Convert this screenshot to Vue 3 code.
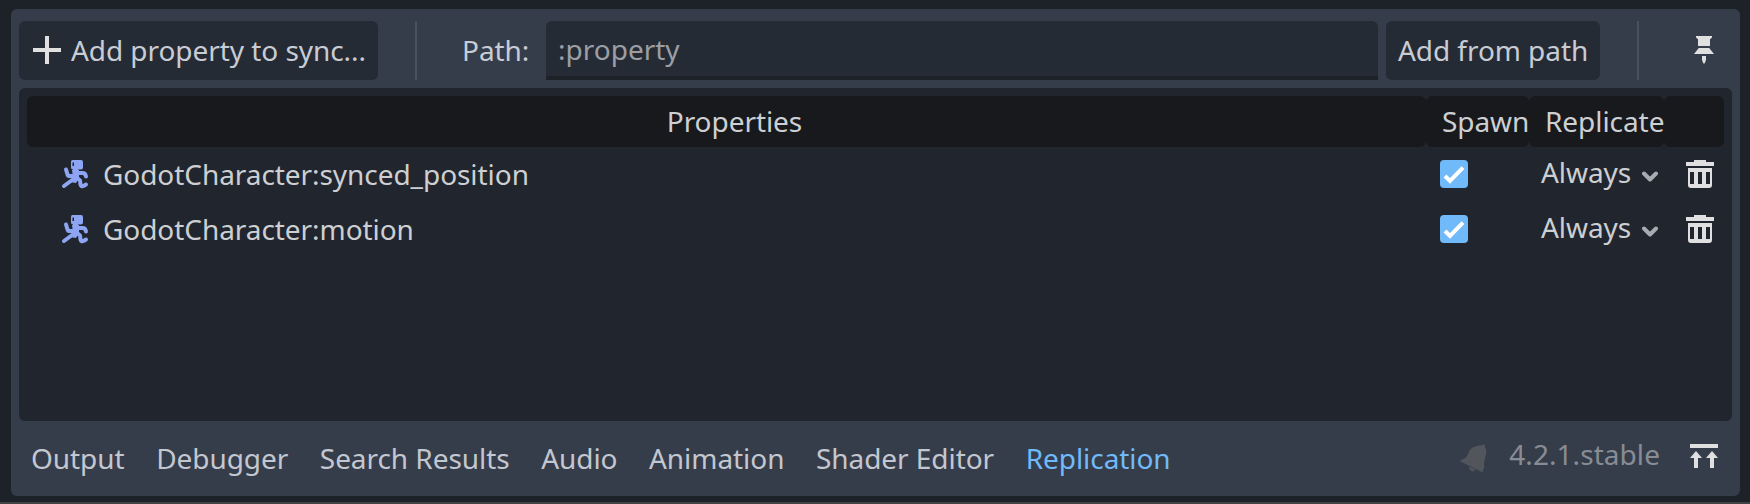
<script setup>
const rows = ['GodotCharacter:synced_position', 'GodotCharacter:motion']
const tabs = ['Output', 'Debugger', 'Search Results', 'Audio', 'Animation', 'Shader Editor', 'Replication']
const active = 'Replication'
</script>

<template>
  <div class="window">
    <section class="panel">
      <div class="toolbar">
        <button class="btn add">
          <svg class="icon" viewBox="0 0 16 16"><path d="M7 1h2v6h6v2H9v6H7V9H1V7h6z" /></svg>
          <span>Add property to sync...</span>
        </button>
        <i class="sep first"></i>
        <span class="label">Path:</span>
        <div class="field"><input placeholder=":property" /></div>
        <button class="btn from"><span>Add from path</span></button>
        <i class="sep second"></i>
        <svg class="icon pin" viewBox="0 0 16 16"><path d="M4 1h8v.7l-1 .9V6H5V2.6l-1-.9zM5.400 7h5.200l2.400 3H3zM7 11h2v2l-.7 1.700h-.6L7 13z" /></svg>
      </div>

      <div class="tree">
        <div class="grid head">
          <div class="cell center">Properties</div>
          <div class="cell">Spawn</div>
          <div class="cell rep">Replicate</div>
          <div class="cell"></div>
        </div>
        <div v-for="row in rows" :key="row" class="grid row">
          <div class="name">
            <svg class="icon body" viewBox="0 0 32 32">
              <path class="solid" fill-rule="evenodd" d="M12.500 2H21q2 0 2 2v5.500q0 2-2 2h-3v2h-5v-2q-2 0-2-2V4q0-2 1.500-2zM12.500 4.500V8H14V4.500z" />
              <path class="limb" d="M6 11.500l1.500 5q.5 1.500 2.500 1.500h4M4 28l9.500-7M18 15h4.500q3 0 3.500 3.500M16 19l4 3.500.5 4q.5 2.500 3 1.500l2.500-1.500" />
              <path class="solid" d="M12 12h7v8l-3 5-6-1 3-5z" />
            </svg>
            <span>{{ row }}</span>
          </div>
          <div class="check">
            <svg class="icon" viewBox="0 0 16 16">
              <rect class="box" x="1" y="1" width="14" height="14" rx="2" />
              <path class="tick" d="M3.500 9l2.500 2.500 6.500-6.700" />
            </svg>
          </div>
          <div class="mode">
            <span>Always</span>
            <svg class="chev" viewBox="0 0 16 12"><path d="M2 2.500l6 6 6-6" /></svg>
          </div>
          <div class="trash">
            <svg class="icon" viewBox="0 0 16 16"><path fill-rule="evenodd" d="M5 1h6v1h4v2H1V2h4zM2 5h12v8.500q0 1.500-1.500 1.500h-9Q2 15 2 13.500zM3 7v6h2V7zM7 7v6h2V7zM11 7v6h2V7z" /></svg>
          </div>
        </div>
      </div>

      <footer class="footer">
        <nav class="tabs">
          <span v-for="t in tabs" :key="t" :class="{ active: t === active }">{{ t }}</span>
        </nav>
        <div class="status">
          <svg class="icon bell" viewBox="0 0 32 32"><path d="M19 4q2.500-1 4.500-.5 1-1.500 2.500-.8 1.500.8 1 2.500 2 3 1 7l-2 8 .2 5.500q-.2 2-1.500 1.800l.8 1.500-1.500 1L2.500 19.500l.2-1.500 4.300-1.800q1.500-1 2.200-2.700l3-6Q14.500 4.500 19 4zM11 24.500l6.500 3q-1.500 2.500-4 1.500-2.500-1-2.500-4.500z" /></svg>
          <span class="version">4.2.1.stable</span>
          <svg class="icon" viewBox="0 0 16 16"><path d="M1 1h14v2H1zM4 4.500L7 8H5v5H3V8H1zM12 4.500L15 8h-2v5h-2V8H9z" /></svg>
        </div>
      </footer>
    </section>
  </div>
</template>

<style>
body { margin: 0; background: #1d2228; }
</style>

<style scoped>
.window {
  box-sizing: border-box;
  width: 1750px;
  height: 504px;
  padding: 9px 10px 0 11px;
  background: #1d2228;
  border-bottom: 2px solid #414244;
  font: 28px/38px "Noto Sans", sans-serif;
  letter-spacing: -0.06px;
  color: #cdcfd2;
  white-space: nowrap;
  overflow: hidden;
}
.panel {
  box-sizing: border-box;
  height: 487px;
  padding: 12px 8px 0;
  border-radius: 6px;
  background: #363d4a;
}
.icon { width: 32px; height: 32px; flex: none; display: block; fill: #e0e0e0; }
.toolbar { display: flex; height: 59px; align-items: center; color: #c8ccd5; }
.btn {
  box-sizing: border-box;
  height: 59px;
  border: 0;
  border-radius: 6px;
  background: #252b34;
  color: inherit;
  font: inherit;
  letter-spacing: inherit;
  padding: 0 12px;
  display: flex;
  align-items: center;
  flex: none;
}
.btn span, .label { padding-bottom: 2px; }
.add { width: 359px; gap: 8px; }
.add .icon { margin-top: -1px; }
.sep { width: 2px; height: 59px; background: #4a505c; flex: none; }
.first { margin-left: 37px; }
.label { width: 84px; margin-left: 45px; }
.field {
  box-sizing: border-box;
  width: 832px;
  height: 59px;
  border-radius: 6px 6px 0 0;
  background: #252b34;
  border-bottom: 4px solid #1d2229;
  padding: 9px 12px 0;
}
.field input {
  width: 100%;
  height: 38px;
  padding: 0;
  border: 0;
  outline: 0;
  background: none;
  font: inherit;
  color: inherit;
  display: block;
}
.field input::placeholder { color: #9b9ea4; opacity: 1; }
.from { width: 214px; margin-left: 8px; }
.second { margin-left: 37px; }
.pin { margin: -1px 0 0 49px; }
.tree {
  box-sizing: border-box;
  height: 333px;
  margin-top: 8px;
  padding: 8px;
  border-radius: 6px;
  background: #21262e;
}
.grid { display: grid; grid-template-columns: 1399px 103px 135px 60px; }
.head { height: 51px; margin-bottom: 1px; }
.cell { border-radius: 6px; background: #18191d; padding: 6px 0 0 16px; }
.cell.center { padding-left: 16px; text-align: center; }
.row { height: 55px; }
.name { display: flex; padding-left: 33px; }
.name .body { margin: 10px 11px 0 0; }
.name span { margin-top: 7px; }
.solid { fill: #8da5f3; }
.limb { fill: none; stroke: #8da5f3; stroke-width: 4; stroke-linecap: round; stroke-linejoin: round; }
.check { padding: 10px 0 0 12px; }
.box { fill: #70bafa; }
.tick { fill: none; stroke: #fff; stroke-width: 2; }
.mode { display: flex; padding: 5px 0 0 12px; }
.chev { width: 16px; height: 12px; margin: 18px 0 0 11px; fill: none; stroke: #a8abb1; stroke-width: 4; stroke-linecap: round; stroke-linejoin: round; }
.trash { padding: 10px 0 0 20px; }
.footer { display: flex; justify-content: space-between; padding: 18px 12px 0; color: #c3c7d0; }
.tabs { display: flex; gap: 31.6px; }
.active { color: #70bafa; }
.status { display: flex; margin-top: -4px; }
.status .icon { margin-top: 7px; }
.status .bell { fill: #52565c; }
.version { margin: 0 28px 0 19px; color: #888c95; letter-spacing: 0.06px; }
</style>
